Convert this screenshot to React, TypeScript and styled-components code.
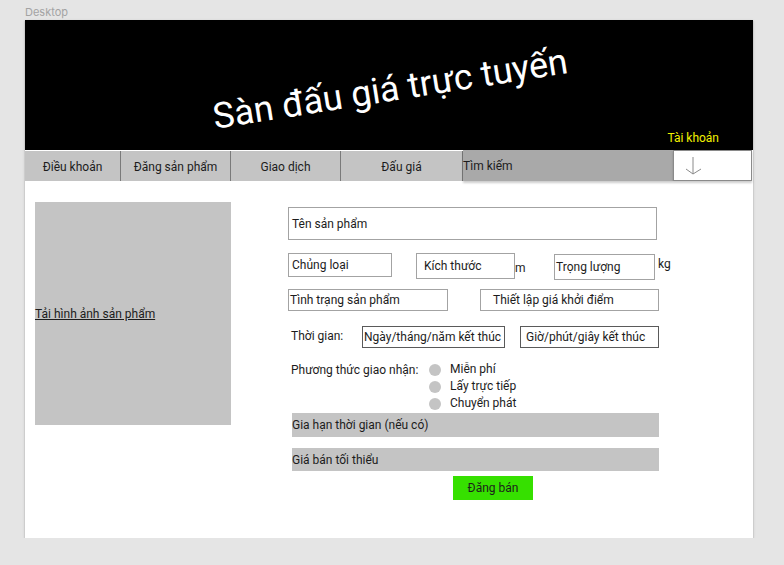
import React from "react";
import styled, { createGlobalStyle } from "styled-components";

const GlobalStyle = createGlobalStyle`
  body {
    margin: 0;
    background-color: #e5e5e5;
    font-family: "Roboto", "Liberation Sans", sans-serif;
    color: #1c1c1c;
  }
`;

const Canvas = styled.div`
  padding: 5px 0 0 25px;
  width: 728px;
`;

const FrameLabel = styled.div`
  font-family: "Inter", "Liberation Sans", sans-serif;
  font-size: 11px;
  line-height: 14px;
  height: 15px;
  color: #a3a3a3;
`;

const Frame = styled.div`
  width: 728px;
  height: 518px;
  background-color: #ffffff;
  box-shadow: 0 1px 1px rgba(0, 0, 0, 0.3), 0 1px 3px rgba(0, 0, 0, 0.15);
  display: flex;
  flex-direction: column;
`;

const Header = styled.header`
  height: 130px;
  background-color: #000000;
  display: flex;
  flex-direction: column;
`;

const TitleArea = styled.div`
  flex: 1;
  display: flex;
  align-items: center;
  justify-content: center;
  padding: 28px 0 0 2px;
`;

const Title = styled.h1`
  margin: 0;
  font-weight: 400;
  font-size: 36px;
  color: #ffffff;
  transform: rotate(-9deg);
  white-space: nowrap;
`;

const AccountRow = styled.div`
  display: flex;
  justify-content: flex-end;
  padding: 0 34px 4px 0;
`;

const AccountLink = styled.span`
  font-size: 12px;
  line-height: 16px;
  color: #f2f200;
`;

const Nav = styled.nav`
  display: flex;
  height: 30px;
  margin-top: 1px;
`;

const NavItem = styled.div<{ $w: number }>`
  box-sizing: border-box;
  flex-shrink: 0;
  width: ${(p) => p.$w}px;
  background-color: #c4c4c4;
  border-right: 1px solid #7a7a7a;
  display: flex;
  align-items: center;
  justify-content: center;
  padding-top: 1px;
  font-size: 12px;
  &:last-of-type {
    border-right: none;
  }
`;

const Search = styled.div`
  flex-shrink: 0;
  width: 210px;
  margin-top: -1px;
  height: 31px;
  background-color: #a9a9a9;
  box-shadow: 0 2px 2px rgba(0, 0, 0, 0.2);
  display: flex;
  align-items: center;
  font-size: 12px;
`;

const Dropdown = styled.div`
  box-sizing: border-box;
  flex-shrink: 0;
  width: 79px;
  margin-top: -1px;
  height: 31px;
  background-color: #ffffff;
  border: 1px solid #8a8a8a;
  box-shadow: 0 2px 2px rgba(0, 0, 0, 0.2);
  display: flex;
  align-items: center;
  padding-left: 11px;
`;

const Body = styled.div`
  display: flex;
  padding: 21px 0 0 10px;
`;

const ImageDrop = styled.div`
  width: 196px;
  height: 223px;
  background-color: #c4c4c4;
  display: flex;
  align-items: center;
  flex-shrink: 0;
`;

const UploadLink = styled.a`
  font-size: 12px;
  color: #1c1c1c;
  text-decoration: underline;
`;

const Form = styled.form`
  margin: 5px 0 0 57px;
  display: flex;
  flex-direction: column;
`;

const Row = styled.div<{ $mt: number }>`
  display: flex;
  align-items: flex-start;
  margin-top: ${(p) => p.$mt}px;
`;

const Field = styled.div<{
  $w: number;
  $h: number;
  $pl?: number;
  $ml?: number;
  $mt?: number;
  $dark?: boolean;
}>`
  box-sizing: border-box;
  width: ${(p) => p.$w}px;
  height: ${(p) => p.$h}px;
  margin-left: ${(p) => p.$ml ?? 0}px;
  margin-top: ${(p) => p.$mt ?? 0}px;
  padding-left: ${(p) => p.$pl ?? 3}px;
  border: 1px solid ${(p) => (p.$dark ? "#5a5a5a" : "#a3a3a3")};
  display: flex;
  align-items: center;
  font-size: 12px;
  white-space: nowrap;
`;

const Unit = styled.span<{ $w: number; $mt: number }>`
  width: ${(p) => p.$w}px;
  margin-top: ${(p) => p.$mt}px;
  font-size: 12px;
  line-height: 15px;
`;

const Label = styled.span<{ $w: number; $mt?: number }>`
  box-sizing: border-box;
  width: ${(p) => p.$w}px;
  margin-top: ${(p) => p.$mt ?? 0}px;
  padding-left: 3px;
  font-size: 12px;
  line-height: 15px;
  white-space: nowrap;
`;

const RadioList = styled.div`
  display: flex;
  flex-direction: column;
`;

const RadioItem = styled.label`
  display: flex;
  align-items: center;
  height: 17px;
  font-size: 12px;
`;

const RadioDot = styled.span`
  width: 12px;
  height: 12px;
  border-radius: 50%;
  background-color: #c4c4c4;
  margin: 2px 9px 0 0;
`;

const Bar = styled.div<{ $h: number; $mt: number }>`
  width: 367px;
  height: ${(p) => p.$h}px;
  margin: ${(p) => p.$mt}px 0 0 4px;
  background-color: #c4c4c4;
  display: flex;
  align-items: center;
  font-size: 12px;
`;

const SubmitButton = styled.button`
  width: 80px;
  height: 24px;
  margin: 5px 0 0 165px;
  border: none;
  background-color: #36e000;
  font-family: "Roboto", "Liberation Sans", sans-serif;
  font-size: 12px;
  color: #1c1c1c;
  padding: 0;
`;

const ArrowDown = () => (
  <svg width="18" height="20" viewBox="0 0 18 20" fill="none">
    <path d="M8 1 V18" stroke="#8a8a8a" strokeWidth="1" />
    <path d="M1 13 L8 18 L16 13" stroke="#8a8a8a" strokeWidth="1" />
  </svg>
);

const navItems = [
  { label: "Điều khoản", w: 96 },
  { label: "Đăng sản phẩm", w: 110 },
  { label: "Giao dịch", w: 110 },
  { label: "Đấu giá", w: 122 },
];

const shipping = ["Miễn phí", "Lấy trực tiếp", "Chuyển phát"];

const App: React.FC = () => {
  return (
    <>
      <GlobalStyle />
      <Canvas>
        <FrameLabel>Desktop</FrameLabel>
        <Frame>
          <Header>
            <TitleArea>
              <Title>Sàn đấu giá trực tuyến</Title>
            </TitleArea>
            <AccountRow>
              <AccountLink>Tài khoản</AccountLink>
            </AccountRow>
          </Header>
          <Nav>
            {navItems.map((n) => (
              <NavItem key={n.label} $w={n.w}>
                {n.label}
              </NavItem>
            ))}
            <Search>Tìm kiếm</Search>
            <Dropdown>
              <ArrowDown />
            </Dropdown>
          </Nav>
          <Body>
            <ImageDrop>
              <UploadLink>Tải hình ảnh sản phẩm</UploadLink>
            </ImageDrop>
            <Form onSubmit={(e) => e.preventDefault()}>
              <Row $mt={0}>
                <Field $w={369} $h={33}>
                  Tên sản phẩm
                </Field>
              </Row>
              <Row $mt={13}>
                <Field $w={104} $h={24}>
                  Chủng loại
                </Field>
                <Field $w={99} $h={26} $ml={24} $pl={7}>
                  Kích thước
                </Field>
                <Unit $w={39} $mt={8}>
                  m
                </Unit>
                <Field $w={101} $h={26} $mt={1} $pl={1}>
                  Trọng lượng
                </Field>
                <Unit $w={20} $mt={4}>
                  &nbsp;kg
                </Unit>
              </Row>
              <Row $mt={9}>
                <Field $w={160} $h={22} $pl={1}>
                  Tình trạng sản phẩm
                </Field>
                <Field $w={179} $h={22} $ml={32} $pl={12}>
                  Thiết lập giá khởi điểm
                </Field>
              </Row>
              <Row $mt={15}>
                <Label $w={74} $mt={3}>
                  Thời gian:
                </Label>
                <Field $w={143} $h={22} $pl={1} $dark>
                  Ngày/tháng/năm kết thúc
                </Field>
                <Field $w={139} $h={22} $ml={15} $pl={5} $dark>
                  Giờ/phút/giây kết thúc
                </Field>
              </Row>
              <Row $mt={12}>
                <Label $w={141} $mt={3}>
                  Phương thức giao nhận:
                </Label>
                <RadioList>
                  {shipping.map((s) => (
                    <RadioItem key={s}>
                      <RadioDot />
                      {s}
                    </RadioItem>
                  ))}
                </RadioList>
              </Row>
              <Bar $h={24} $mt={2}>
                Gia hạn thời gian (nếu có)
              </Bar>
              <Bar $h={23} $mt={11}>
                Giá bán tối thiểu
              </Bar>
              <SubmitButton type="submit">Đăng bán</SubmitButton>
            </Form>
          </Body>
        </Frame>
      </Canvas>
    </>
  );
};

export default App;
